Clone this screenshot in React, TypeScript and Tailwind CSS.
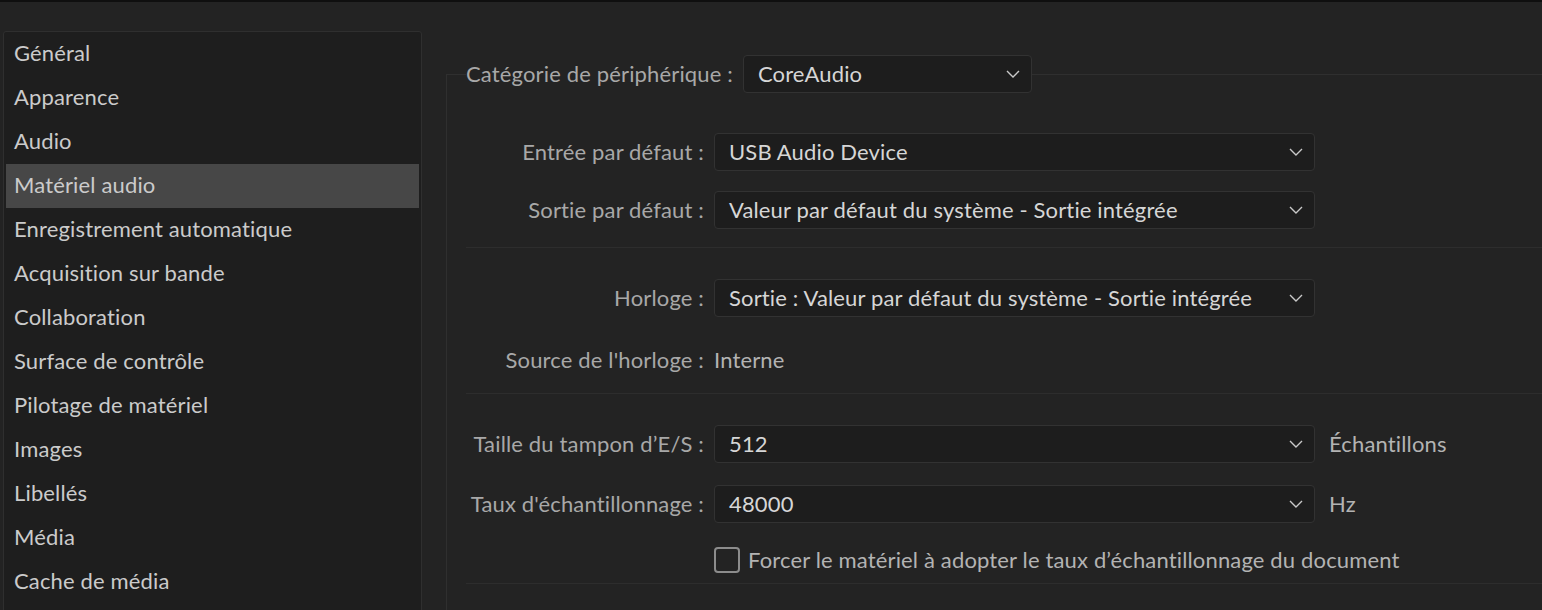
const menuItems = [
  'Général',
  'Apparence',
  'Audio',
  'Matériel audio',
  'Enregistrement automatique',
  'Acquisition sur bande',
  'Collaboration',
  'Surface de contrôle',
  'Pilotage de matériel',
  'Images',
  'Libellés',
  'Média',
  'Cache de média',
];

function Chevron() {
  return (
    <svg width="14" height="8" viewBox="0 0 14 8" fill="none" className="shrink-0">
      <polyline points="1,1 7,7 13,1" stroke="#c9c9c9" strokeWidth="1.4" />
    </svg>
  );
}

function Select({ value, width }: { value: string; width: string }) {
  return (
    <div
      className={`${width} h-[38px] flex items-center justify-between pl-[14px] pr-[11px] bg-[#1d1d1d] border border-[#323232] rounded-[4px] text-[#d6d6d6]`}
    >
      <span className="whitespace-nowrap leading-normal pb-[1px]">{value}</span>
      <Chevron />
    </div>
  );
}

function Row({ label, children, className = '' }: { label: string; children: React.ReactNode; className?: string }) {
  return (
    <div className={`flex items-center ${className}`}>
      <div className="w-[248px] shrink-0 text-right pr-[10px] text-[#a8a8a8] whitespace-nowrap pb-[1px]">{label}</div>
      {children}
    </div>
  );
}

export default function App() {
  return (
    <div
      className="w-[1542px] h-[610px] overflow-hidden bg-[#232323] text-[22px] leading-normal tracking-[0.15px]"
      style={{ fontFamily: 'Lato, "Noto Sans", sans-serif' }}
    >
      <div className="h-[2px] bg-[#0f0f0f]" />
      <div className="flex">
        {/* Sidebar */}
        <div className="pl-[3px] pt-[29px] shrink-0">
          <div className="w-[419px] h-[700px] bg-[#1e1e1e] border border-[#2f2f2f] rounded-[3px] px-[2px]">
            {menuItems.map((item) => (
              <div
                key={item}
                className={`h-[44px] flex items-center pl-[8px] pb-[3px] text-[#cbcbcb] ${
                  item === 'Matériel audio' ? 'bg-[#474747]' : ''
                }`}
              >
                {item}
              </div>
            ))}
          </div>
        </div>

        {/* Settings */}
        <fieldset className="flex-1 ml-[24px] mt-[53px] border-l border-t border-[#2f2f2f] pl-[19px] min-w-0">
          <legend>
            <div className="flex items-center">
              <span className="text-[#a8a8a8] pr-[10px] whitespace-nowrap pb-[1px]">Catégorie de périphérique :</span>
              <Select value="CoreAudio" width="w-[289px]" />
            </div>
          </legend>

          <Row label="Entrée par défaut :" className="mt-[40px]">
            <Select value="USB Audio Device" width="w-[601px]" />
          </Row>
          <Row label="Sortie par défaut :" className="mt-[20px]">
            <Select value="Valeur par défaut du système - Sortie intégrée" width="w-[601px]" />
          </Row>

          <div className="h-px bg-[#2d2d2d] mt-[18px]" />

          <Row label="Horloge :" className="mt-[31px]">
            <Select value="Sortie : Valeur par défaut du système - Sortie intégrée" width="w-[601px]" />
          </Row>
          <Row label="Source de l'horloge :" className="mt-[24px] h-[38px]">
            <span className="text-[#b3b3b3] pb-[1px]">Interne</span>
          </Row>

          <div className="h-px bg-[#2d2d2d] mt-[14px]" />

          <Row label="Taille du tampon d’E/S :" className="mt-[31px]">
            <Select value="512" width="w-[601px]" />
            <span className="ml-[14px] text-[#b3b3b3] pb-[1px]">Échantillons</span>
          </Row>
          <Row label="Taux d'échantillonnage :" className="mt-[22px]">
            <Select value="48000" width="w-[601px]" />
            <span className="ml-[14px] text-[#b3b3b3] pb-[1px]">Hz</span>
          </Row>

          <div className="flex items-center h-[26px] mt-[24px] pl-[248px]">
            <div className="w-[26px] h-[26px] border-2 border-[#8c8c8c] rounded-[4px] shrink-0" />
            <span className="ml-[8px] text-[#b3b3b3] whitespace-nowrap pb-[1px]">
              Forcer le matériel à adopter le taux d’échantillonnage du document
            </span>
          </div>

          <div className="h-px bg-[#2d2d2d] mt-[10px]" />
        </fieldset>
      </div>
    </div>
  );
}
